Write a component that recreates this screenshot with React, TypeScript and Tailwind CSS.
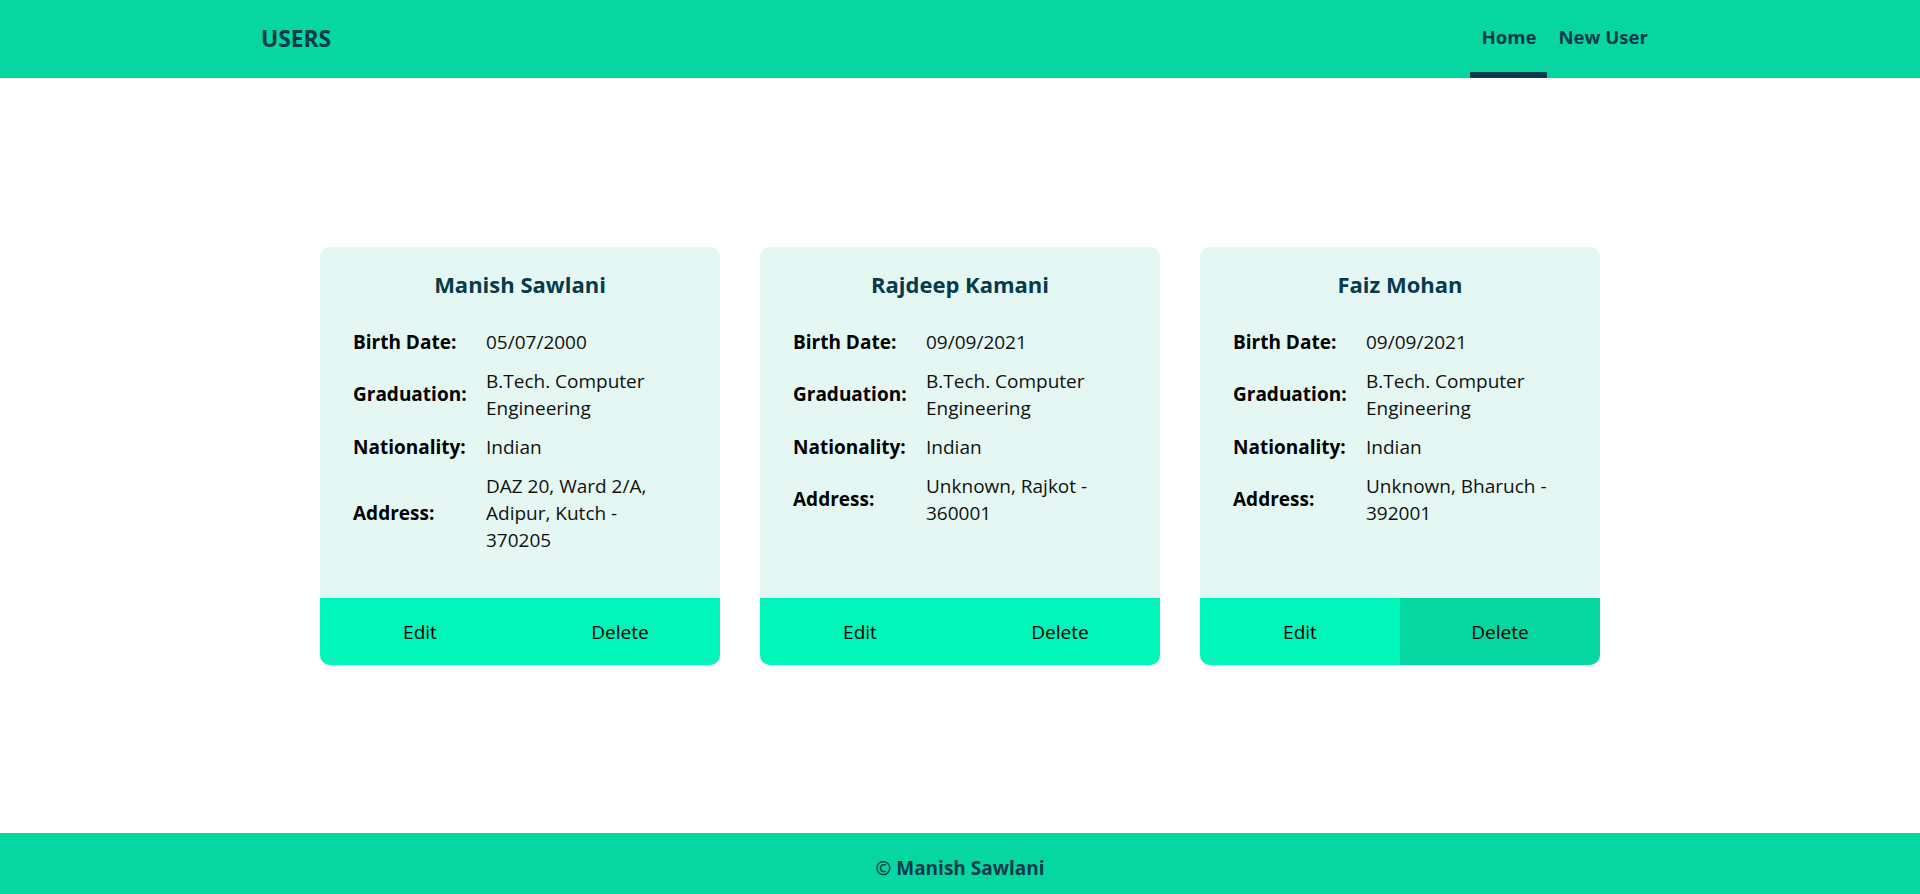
import React from "react";

type User = {
  name: string;
  birth: string;
  grad: string;
  nationality: string;
  address: string;
};

const users: User[] = [
  {
    name: "Manish Sawlani",
    birth: "05/07/2000",
    grad: "B.Tech. Computer Engineering",
    nationality: "Indian",
    address: "DAZ 20, Ward 2/A, Adipur, Kutch - 370205",
  },
  {
    name: "Rajdeep Kamani",
    birth: "09/09/2021",
    grad: "B.Tech. Computer Engineering",
    nationality: "Indian",
    address: "Unknown, Rajkot - 360001",
  },
  {
    name: "Faiz Mohan",
    birth: "09/09/2021",
    grad: "B.Tech. Computer Engineering",
    nationality: "Indian",
    address: "Unknown, Bharuch - 392001",
  },
];

function Row({ label, value }: { label: string; value: string }) {
  return (
    <tr>
      <td className="w-[133px] px-[8px] py-[6px] align-middle font-bold text-black">{label}</td>
      <td className="px-[8px] py-[6px] align-middle text-[#111]">{value}</td>
    </tr>
  );
}

function Card({ user, hoverDelete }: { user: User; hoverDelete?: boolean }) {
  return (
    <div className="flex w-[400px] flex-col overflow-hidden rounded-[10px] bg-[#E4F7F2]">
      <div className="flex-1 px-[25px] pt-[21px] pb-[38px]">
        <h2 className="mb-[22px] text-center text-[22px] leading-[33px] font-bold text-[#073B4C]">
          {user.name}
        </h2>
        <table className="w-full border-separate border-spacing-0 text-[19px] leading-[27px]">
          <tbody>
            <Row label="Birth Date:" value={user.birth} />
            <Row label="Graduation:" value={user.grad} />
            <Row label="Nationality:" value={user.nationality} />
            <Row label="Address:" value={user.address} />
          </tbody>
        </table>
      </div>
      <div className="flex h-[67px]">
        <button className="flex flex-1 items-center justify-center bg-[#00F5B8] pt-[2px] text-[19px] font-medium text-black">
          Edit
        </button>
        <button
          className={
            hoverDelete
              ? "flex flex-1 items-center justify-center bg-[#06D6A0] pt-[2px] text-[19px] font-medium text-black"
              : "flex flex-1 items-center justify-center bg-[#00F5B8] pt-[2px] text-[19px] font-medium text-black"
          }
        >
          Delete
        </button>
      </div>
    </div>
  );
}

export default function App() {
  return (
    <div
      className="flex min-h-screen flex-col bg-white"
      style={{ fontFamily: '"Open Sans", "Noto Sans", sans-serif' }}
    >
      <header className="h-[78px] bg-[#06D6A0]">
        <div className="mx-auto flex h-full w-[1398px] items-center justify-between">
          <div className="text-[22.8px] font-bold text-[#073B4C]">USERS</div>
          <nav className="flex h-full">
            <a className="flex h-full items-center border-b-[6px] border-[#073B4C] px-[11px] pt-[1px] text-[18.6px] font-bold text-[#073B4C]">
              Home
            </a>
            <a className="flex h-full items-center border-b-[6px] border-transparent px-[11px] pt-[1px] text-[18.6px] font-bold text-[#073B4C]">
              New User
            </a>
          </nav>
        </div>
      </header>
      <main className="flex flex-1 items-center justify-center">
        <div className="flex items-stretch gap-[40px]">
          {users.map((u, i) => (
            <Card key={u.name} user={u} hoverDelete={i === 2} />
          ))}
        </div>
      </main>
      <footer className="flex h-[61px] items-center justify-center bg-[#06D6A0] pt-[9px] text-[19px] font-bold text-[#073B4C]">
        © Manish Sawlani
      </footer>
    </div>
  );
}
